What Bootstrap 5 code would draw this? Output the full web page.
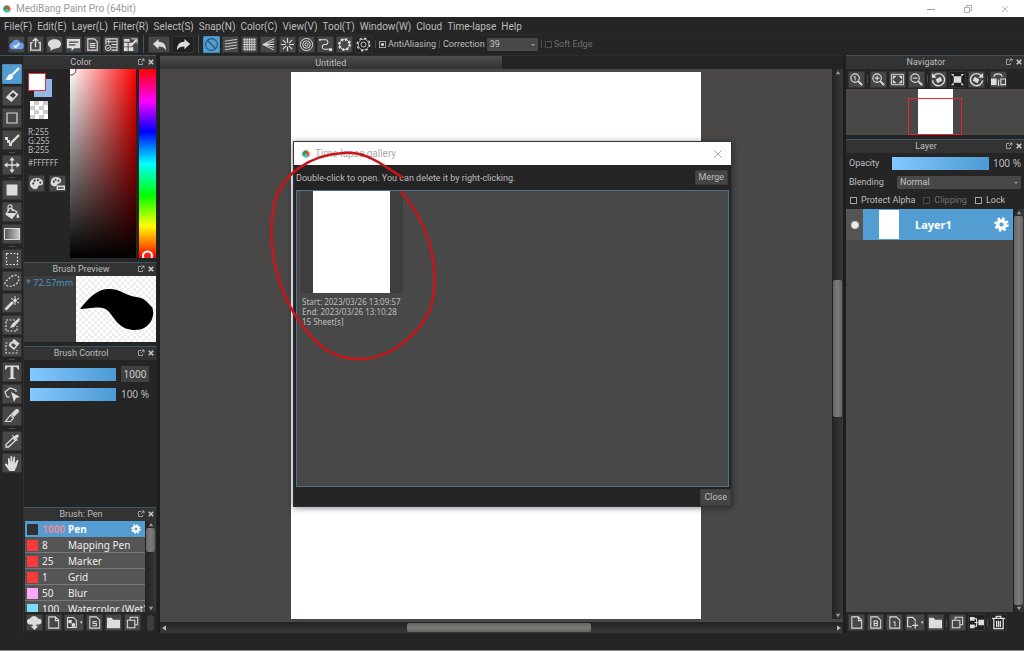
<!DOCTYPE html>
<html lang="en">
<head>
<meta charset="utf-8">
<meta name="viewport" content="width=device-width, initial-scale=1">
<title>MediBang Paint Pro (64bit)</title>
<link rel="stylesheet" href="https://cdn.jsdelivr.net/npm/bootstrap@5.3.0/dist/css/bootstrap.min.css">
<style>
:root{--ink:#252525;--panel:#494846;--line:#3d5663;--hot:#539dd3;--txt:#bdbdbd}
body{font-family:Roboto,"Noto Sans",sans-serif;font-size:9px;line-height:12px;color:var(--txt);background:var(--ink)}
button,input,select{font-family:inherit}
svg{display:block}
.app{height:100vh;min-height:600px;border-bottom:1px solid #8b8785}
.titlebar{height:17px;background:#fff;color:#999;font-size:10px;padding:0 14px 0 2px}
.titlebar button,.gallery-title button{border:0;background:none;padding:0;color:#999}
.winbtns{gap:27px}
.menubar{height:18px;font-size:10px;gap:5px;padding:2px 4px 0;border-bottom:1px solid #2b2b2b}
.menubar a{color:#bdbdbd;text-decoration:none;white-space:nowrap}
.toolbar{height:20px;padding:0 4px 2px;gap:2px}
.ib{width:17px;height:17px;padding:0;border:1px solid #343434;border-radius:1px;background:#474747;color:#dcdcdc;display:flex;align-items:center;justify-content:center;flex:none}
.ib svg{width:15px;height:15px}
.ib.wide{width:22px}
.ib.dark{background:#202020}
.ib.on{background:var(--hot);border-color:#4a8cbb;color:#26587a}
.vsep{width:1px;height:8px;background:#4b4b4b;margin:0 1px;flex:none}
.vline{width:1px;height:18px;background:#36586d;margin:0 2px;flex:none}
.tick{appearance:none;width:7px;height:7px;margin:0;border:1px solid #a6a6a6;background:#222;flex:none}
.tick:checked{background:radial-gradient(#d5d5d5 0 30%,#222 55%)}
.tick:disabled{border-color:#4c4c4c}
.off{color:#6f6f6f}
.pick{appearance:none;height:13px;border:0;border-radius:1px;padding:0 3px;font-size:9px;line-height:12px;color:#c4c4c4;background:#484848}
.pickbox{position:relative}
.pickbox::after{content:"";position:absolute;right:3px;top:6px;border:2px solid transparent;border-top-color:#999;pointer-events:none}
.strip{width:24px;padding:8px 2px 0;gap:2px;border-top:1px solid var(--line);border-right:1px solid #303030}
.strip .ib{width:20px;height:20px}
.strip .ib svg{width:16px;height:16px}
.strip .ib.on{color:#fff}
.strip i{height:1px;width:6px;background:#4b4b4b;align-self:center}
.dock-l{width:133px;padding-right:1px}
.dock-r{width:178px}
.dhead{height:14px;border-top:1px solid var(--line);background:#333;text-align:center;position:relative;flex:none;padding-right:18px}
.dhead span{position:absolute;right:1px;top:2px;display:flex;gap:2px;color:#c8c8c8}
.dhead svg{width:8px;height:8px}
.colorbody{height:193px;padding:0 0 4px 4px}
.rgb{width:42px;font-family:"Noto Sans",sans-serif;line-height:9px;font-size:8px}
.swatches{height:32px;position:relative}
.fg,.bgc{position:absolute;width:18px;height:18px}
.fg{left:0;top:4px;background:#fff;border:1px solid #e0303a}
.bgc{left:6px;top:10px;background:#92b8e6}
.clear{width:18px;height:18px;margin-left:2px;background:repeating-conic-gradient(#ccc 0 25%,#fff 0 50%) 0 0/9px 9px}
.sv{width:66px;background:linear-gradient(transparent,#000),linear-gradient(90deg,#fff,#f00)}
.hue{width:17px;background:linear-gradient(#f00,#f0f 17%,#00f 33%,#0ff 50%,#0f0 67%,#ff0 83%,#f00);overflow:hidden}
.hue svg{margin-top:auto}
.preview{height:66px;background:#3d3d3d}
.preview .size{color:#4f93c2;padding:1px 2px;font-family:"Noto Sans",sans-serif}
.preview .ink{width:80px;background:repeating-conic-gradient(#eee 0 25%,#fff 0 50%) 0 0/6px 6px}
.gapline{height:4px;flex:none}
.bar{appearance:none;height:13px;margin:0;background:linear-gradient(90deg,#84c8ff,#4c9ad4);min-width:0}
.bar::-webkit-slider-thumb{appearance:none;width:1px;height:1px;opacity:0}
.ctl{height:20px;padding:0 7px 0 6px;gap:5px}
.num{width:28px;height:16px;border:0;background:#414141;color:#ccc;text-align:center;font:10px "Noto Sans",sans-serif;padding:0}
.pct{font:10px "Noto Sans",sans-serif;white-space:nowrap}
.brushes{height:91px;background:#2a2a2a;overflow:hidden;padding-left:1px}
.brow{height:16px;border-bottom:1px solid #777;background:#555;font:10px/16px "Noto Sans",sans-serif;color:#eee;flex:none;padding-left:2px}
.brow .chip{width:11px;height:11px;flex:none;margin-top:3px}
.brow .val{width:30px;padding-left:4px;white-space:nowrap;flex:none}
.brow.sel{background:var(--hot);border-color:var(--hot);font-weight:700;color:#fff}
.brow.sel .val{color:#e68a9a}
.sb{width:11px;background:linear-gradient(90deg,#222,#383838);flex:none;padding:0 1px}
.sb svg{width:8px;height:7px;color:#999;flex:none;align-self:center}
.thumb{background:linear-gradient(90deg,#666,#7b7b78,#666);border-radius:2px}
.btnrow{height:21px;gap:2px;padding:0 2px;flex:none}
.btnrow .vsep{margin:0}
.btnrow .wide{width:20px}
.status{height:17px;flex:none}
.mid{min-width:0;border:solid #1e1e1e;border-width:0 3px}
.tabs{height:14px;background:#232323;border-top:1px solid #2c2c2c}
.tabs .tab{width:50%;background:linear-gradient(#4d4d4d,#303030);text-align:center;line-height:14px}
.stage{background:var(--panel);min-width:0;padding-top:3px}
.paper{width:410px;margin-left:131px;background:#fff}
.hsb{height:11px;background:linear-gradient(#222,#3a3a3a);padding:1px 0}
.hsb .thumb{background:linear-gradient(#666763,#7a7a76,#666763)}
.hsb svg{width:8px;height:8px;color:#bbb}
.navbtns{height:20px}
.navview{height:46px;background:var(--panel)}
.navpaper{width:35px;background:#fff}
.navframe{position:absolute;left:62px;top:9px;width:54px;height:37px;border:1px solid #e3262f}
.field{padding:0 3px;height:18px}
.field.tall{height:20px}
.field label.name{width:44px}
.field #op{width:97px}
.layers{background:var(--panel)}
.layer{height:31px;background:var(--hot);color:#fff;font:700 11px "Noto Sans",sans-serif}
.eye{width:17px;background:#555}
.eye b{width:8px;height:8px;border-radius:50%;background:radial-gradient(#eee 40%,#999)}
.gallery{position:absolute;left:133px;top:86px;width:439px;height:366px;background:#242424;border:1px solid #2a3740;box-shadow:0 1px 6px #0007}
.gallery-title{height:23px;background:#fff;color:#aaa;font-size:10px;padding:1px 7px 0}
.gallery-top{height:25px;padding:0 3px 0 2px}
.gbtn{border:1px solid #3c3c3c;border-radius:1px;background:#454545;color:#bbb;padding:0 3px;font-size:9px;line-height:13px}
.gclose{line-height:15px;margin-top:2px}
.glist{border:1px solid #50728a;background:#484848;margin:0 2px;padding:0 4px}
.shot{width:102px;height:102px;background:#3e3e3e}
.shot div{width:77px;background:#fff;margin-right:2px}
.shottext{font:8px/10px "Noto Sans",sans-serif;padding:4px 0 0 1px;white-space:nowrap}
.ring{position:absolute;left:106px;top:92px;width:174px;height:216px;pointer-events:none}
</style>
</head>
<body>
<svg width="0" height="0" class="position-absolute" aria-hidden="true">
<defs>
<g id="logo"><circle cx="8" cy="8" r="7.500" fill="#eee"/><path d="M8 8V2A6 6 0 0 0 3 11z" fill="#18a05c"/><path d="M8 8L3 11A6 6 0 0 0 12 12z" fill="#2dc3c8"/><path d="M8 8V2A6 6 0 0 1 12 12z" fill="#e8502c"/></g>
</defs>
<symbol id="cloud" viewBox="0 0 16 16"><path d="M4 13a3.500 3.500 0 0 1-.5-6.900A4.500 4.500 0 0 1 12 6a3.500 3.500 0 0 1 .5 7z" fill="#6ea0e8"/><path d="M5 9l2.200 2L11 7" fill="none" stroke="#fff" stroke-width="1.600"/></symbol>
<symbol id="share" viewBox="0 0 16 16"><path d="M5 6H3v8h10V6h-2M8 11V2M5 4.500L8 1.500l3 3" fill="none" stroke="currentColor" stroke-width="1.500"/></symbol>
<symbol id="talk" viewBox="0 0 16 16"><path d="M8 2.500c4 0 7 2 7 5s-3 5-7 5l-4.500 2 .5-3C2 10.500 1 9 1 7.500c0-3 3-5 7-5z" fill="currentColor"/></symbol>
<symbol id="msg" viewBox="0 0 16 16"><path d="M1 2h14v10H9l-3 3v-3H1z" fill="currentColor"/><path d="M3 5.500h10M3 8.500h7" stroke="#444" stroke-width="1.300"/></symbol>
<symbol id="doc" viewBox="0 0 16 16"><path d="M3 2h7l3 3v9H3zM5 7h6M5 9h6M5 11h6" fill="none" stroke="currentColor" stroke-width="1.200"/></symbol>
<symbol id="sheet" viewBox="0 0 16 16"><path d="M2 2h12v12H8M2 2v6M2 5h12M5 2v5M8 8h6M8 11h6" fill="none" stroke="currentColor" stroke-width="1.100"/><circle cx="4.500" cy="11.500" r="3" fill="none" stroke="currentColor"/><path d="M3 11.500l1.300 1L6 10.500" fill="none" stroke="currentColor"/></symbol>
<symbol id="gridpen" viewBox="0 0 16 16"><path d="M1 2h6v3H1zM1 6h4v4H1zM6 6h4v4H6zM1 11h4v4H1zM6 11h5v4H6zM9 7l5-5 1 2-5 5z" fill="currentColor"/><path d="M9 2h6v5" stroke="currentColor" fill="none"/></symbol>
<symbol id="undo" viewBox="0 0 16 16"><path d="M7 2v3c5 0 8 3 8 9-2-3-4-4-8-4v3L1 7.500z" fill="currentColor"/></symbol>
<symbol id="redo" viewBox="0 0 16 16"><path d="M9 2v3c-5 0-8 3-8 9 2-3 4-4 8-4v3l6-5.500z" fill="currentColor"/></symbol>
<symbol id="ban" viewBox="0 0 16 16"><circle cx="8" cy="8" r="6.300" fill="none" stroke="currentColor" stroke-width="1.300"/><path d="M3.500 3.500l9 9" stroke="currentColor" stroke-width="1.300"/></symbol>
<symbol id="par" viewBox="0 0 16 16"><path d="M2 4.500l13-2M2 7.500l13-2M2 10.500l13-2M2 13.500l13-2" stroke="currentColor" stroke-width=".9"/></symbol>
<symbol id="grid" viewBox="0 0 16 16"><path d="M1 3h14M1 5.500h14M1 8h14M1 10.500h14M1 13h14M3 1v14M5.500 1v14M8 1v14M10.500 1v14M13 1v14" stroke="currentColor" stroke-width=".9"/></symbol>
<symbol id="vanish" viewBox="0 0 16 16"><path d="M14 2L2 8l12 6M14 5L2 8l12 3M2 8h12" fill="none" stroke="currentColor"/></symbol>
<symbol id="radial" viewBox="0 0 16 16"><path d="M8 1v5M8 10v5M1 8h5M10 8h5M3 3l3.500 3.500M9.500 9.500L13 13M13 3L9.500 6.500M6.500 9.500L3 13" stroke="currentColor" stroke-width="1.200"/></symbol>
<symbol id="rings" viewBox="0 0 16 16"><g fill="none" stroke="currentColor"><circle cx="8" cy="8" r="6.500"/><circle cx="8" cy="8" r="4"/><circle cx="8" cy="8" r="1.700"/></g></symbol>
<symbol id="curve" viewBox="0 0 16 16"><path d="M2 3h7a2.800 2.800 0 0 1 0 5H7a2.500 2.500 0 0 0 0 5h6" fill="none" stroke="currentColor" stroke-width="1.100"/><path d="M1 2h2v2H1zM12 12h3v3h-3z" fill="currentColor"/></symbol>
<symbol id="dots" viewBox="0 0 16 16"><circle cx="8" cy="8" r="5.500" fill="none" stroke="currentColor"/><circle cx="8" cy="8" r="5.500" fill="none" stroke="currentColor" stroke-width="3" stroke-dasharray="2 2.320"/></symbol>
<symbol id="gearo" viewBox="0 0 16 16"><g fill="none" stroke="currentColor"><circle cx="8" cy="8" r="5.700" stroke-width=".9"/><circle cx="8" cy="8" r="2.700"/><circle cx="8" cy="8" r="6.800" stroke-width="1.300" stroke-dasharray="2.600 2.740"/></g></symbol>
<symbol id="gear" viewBox="0 0 16 16"><circle cx="8" cy="8" r="4" fill="none" stroke="currentColor" stroke-width="3.500"/><circle cx="8" cy="8" r="6.300" fill="none" stroke="currentColor" stroke-width="2.800" stroke-dasharray="2.600 2.348"/></symbol>
<symbol id="brush" viewBox="0 0 16 16"><path d="M15 2L8 9" stroke="currentColor" stroke-width="2.200"/><path d="M7 8l2 2c0 4-4 5-8 3 3 0 2-5 6-5z" fill="currentColor"/></symbol>
<symbol id="eraser" viewBox="0 0 16 16"><path d="M9 2l5.500 4.500L7.500 14 1.500 9.500z" fill="currentColor"/><path d="M9 4.500l3 2.500-3 3-3.300-2.500z" fill="#3d3d3d"/></symbol>
<symbol id="sq" viewBox="0 0 16 16"><path d="M3 3h10v10H3z" fill="none" stroke="currentColor" stroke-width="1.200"/></symbol>
<symbol id="polyline" viewBox="0 0 16 16"><path d="M7 11l8-8" stroke="currentColor" stroke-width="2.400"/><path d="M1 5h3v3H1zM3 8h3v3H3zM5 11h3v3H5z" fill="currentColor"/></symbol>
<symbol id="move" viewBox="0 0 16 16"><path d="M8 2v12M2 8h12" stroke="currentColor" stroke-width="1.300"/><path d="M8 0l2.700 3.500H5.300zM8 16l2.700-3.500H5.300zM0 8l3.500-2.700v5.400zM16 8l-3.500-2.700v5.400z" fill="currentColor"/></symbol>
<symbol id="fillsq" viewBox="0 0 16 16"><path d="M2.500 2.500h11v11h-11z" fill="currentColor"/></symbol>
<symbol id="bucket" viewBox="0 0 16 16"><path d="M2 9h10l-4 6-6-4z" fill="currentColor"/><path d="M4 8V3c0-3 4-3 4 0v4M6 4l7 4-5 6-6-4z" fill="none" stroke="currentColor" stroke-width="1.200"/><path d="M14 9c1 3 2 5 0 5s-2-2 0-5z" fill="currentColor"/></symbol>
<linearGradient id="gr"><stop stop-color="#555"/><stop offset="1" stop-color="#ccc"/></linearGradient>
<symbol id="grad" viewBox="0 0 16 16"><path d="M.5 2.500h15v11H.5z" fill="url(#gr)" stroke="currentColor"/></symbol>
<symbol id="sel" viewBox="0 0 16 16"><path d="M2.500 2.500h11v11h-11z" fill="none" stroke="currentColor" stroke-width="1.200" stroke-dasharray="2 1.500"/></symbol>
<symbol id="lasso" viewBox="0 0 16 16"><path d="M2 8C5 6 7 3 11 2c4 0 5 4 3 7s-7 5-10 4-4-3-2-5z" fill="none" stroke="currentColor" stroke-width="1.200" stroke-dasharray="2 1.500"/></symbol>
<symbol id="wand" viewBox="0 0 16 16"><path d="M1.500 14.500L9 7" stroke="currentColor" stroke-width="2.600"/><path d="M11 1v3M11 7v3M7 3l2 1.500M15 3l-2 1.500M15 8l-2-1" stroke="currentColor"/><circle cx="11" cy="5.500" r="1.800" fill="currentColor"/></symbol>
<symbol id="selpen" viewBox="0 0 16 16"><path d="M11 3H2v11h11V9" fill="none" stroke="currentColor" stroke-width="1.200" stroke-dasharray="2 1.500"/><path d="M15 1l1 2-6 7-4 1 2-4z" fill="currentColor"/></symbol>
<symbol id="selera" viewBox="0 0 16 16"><path d="M7 4H2v10h11v-3" fill="none" stroke="currentColor" stroke-width="1.200" stroke-dasharray="2 1.500"/><path d="M10 0l5.500 4.500L10 11 4.500 6.500z" fill="currentColor"/><path d="M9 4l3 2.500-2 2.300-3-2.500z" fill="#444"/></symbol>
<symbol id="type" viewBox="0 0 16 16"><path d="M1 1.500h14v4h-1.200c-.3-1.700-1-2.500-2.800-2.500H9.500v10c0 .9.500 1.200 2 1.200v.8h-7v-.8c1.500 0 2-.3 2-1.200V3H5c-1.800 0-2.500.8-2.800 2.500H1z" fill="currentColor"/></symbol>
<symbol id="selarrow" viewBox="0 0 16 16"><path d="M6 11H3L1 6l5-4 6 2v2" fill="none" stroke="currentColor" stroke-width="1.200"/><path d="M7 6l9 5-4 1-2 4z" fill="currentColor"/></symbol>
<symbol id="knife" viewBox="0 0 16 16"><path d="M12 1c3 0 4 2 2 4l-4 4-3-3z" fill="currentColor"/><path d="M6.500 7l3 3-3 3.500H1.500z" fill="none" stroke="currentColor" stroke-width="1.200"/></symbol>
<symbol id="dropper" viewBox="0 0 16 16"><path d="M9 5l2.500 2.500-7 6.500H2v-2.500z" fill="none" stroke="currentColor" stroke-width="1.300"/><path d="M8 3l5 5 1-1-1.500-1.500C17 3 14-1 10.500 3.500L9 2z" fill="currentColor"/></symbol>
<symbol id="hand" viewBox="0 0 16 16"><path d="M4 9V3.500a1 1 0 0 1 1.600 0L6.500 8V1.500a1 1 0 0 1 1.700 0V8L9.500 2a1 1 0 0 1 1.600.3L10.800 8.500 13 5a1 1 0 0 1 1.500.6L12.500 12l-2 4h-5L1 10a1 1 0 0 1 1.500-1.200L4 10z" fill="currentColor"/></symbol>
<symbol id="palette" viewBox="0 0 16 16"><path d="M8 2c4 0 7 2 7 5s-2 3-4 3-1 4-4 4c-4 0-6-3-6-6s3-6 7-6z" fill="currentColor"/><g fill="#3a3a3a"><circle cx="4.500" cy="8" r="1.200"/><circle cx="6" cy="5" r="1.200"/><circle cx="9.500" cy="4.500" r="1.200"/><circle cx="12" cy="7" r="1.200"/></g></symbol>
<symbol id="palette2" viewBox="0 0 16 16"><path d="M6 1c4 0 6 2 6 4S10 8 9 8s-2 4-5 3-4-3-3-6 3-4 5-4zM7 10h9v5H7z" fill="currentColor"/><g fill="#3a3a3a"><circle cx="4" cy="6" r="1.100"/><circle cx="6" cy="4" r="1.100"/><circle cx="9" cy="5" r="1.100"/><path d="M8.500 12h6v1.500h-6z"/></g></symbol>
<symbol id="pop" viewBox="0 0 8 8"><path d="M4 1.500H1.500v5h4V5M4.500 1h2.500v2.500M7 1L4 4" fill="none" stroke="currentColor" stroke-width=".7"/></symbol>
<symbol id="xx" viewBox="0 0 8 8"><path d="M1.800 1.800l4.400 4.400M6.200 1.800l-4.400 4.400" stroke="currentColor" stroke-width="1.600"/></symbol>
<symbol id="thinx" viewBox="0 0 16 16"><path d="M3 3l10 10M13 3L3 13" stroke="currentColor" stroke-width="1.100"/></symbol>
<symbol id="up" viewBox="0 0 8 8"><path d="M4 2l2.500 4h-5z" fill="currentColor"/></symbol>
<symbol id="down" viewBox="0 0 8 8"><path d="M4 6l2.500-4h-5z" fill="currentColor"/></symbol>
<symbol id="left" viewBox="0 0 8 8"><path d="M2 4l4-2.500v5z" fill="currentColor"/></symbol>
<symbol id="right" viewBox="0 0 8 8"><path d="M6 4L2 1.500v5z" fill="currentColor"/></symbol>
<symbol id="clouddl" viewBox="0 0 16 16"><path d="M3 10a3 3 0 0 1 0-6 5 5 0 0 1 9 0 3 3 0 0 1 1 6h-3v2h2l-4 4-4-4h2v-2z" fill="currentColor"/></symbol>
<symbol id="page" viewBox="0 0 16 16"><path d="M3 2h7l3.500 3.500V14H3zM10 2v4h3.500" fill="none" stroke="currentColor" stroke-width="1.100"/></symbol>
<symbol id="pagepat" viewBox="0 0 16 16"><path d="M3 2h7l3.500 3.500V14H3z" fill="none" stroke="currentColor" stroke-width="1.200"/><path d="M4 5h4v4H4zM8 9h4v4H8z" fill="currentColor"/></symbol>
<symbol id="pages" viewBox="0 0 16 16"><path d="M3 2h7l3.500 3.500V14H3zM10.500 7H6.500v2h3.500v2.500H6" fill="none" stroke="currentColor" stroke-width="1.100"/></symbol>
<symbol id="page8" viewBox="0 0 16 16"><path d="M3 2h7l3.500 3.500V14H3zM6.500 6.500h3.500v5H6.500zM6.500 9H10" fill="none" stroke="currentColor" stroke-width="1.100"/></symbol>
<symbol id="page1" viewBox="0 0 16 16"><path d="M3 2h7l3.500 3.500V14H3zM6.500 7.500h2V12" fill="none" stroke="currentColor" stroke-width="1.100"/></symbol>
<symbol id="pageplus" viewBox="0 0 16 16"><path d="M7 13H2V2h6l3 3v2M11 8v7M7.500 11.500h7" fill="none" stroke="currentColor" stroke-width="1.400"/></symbol>
<symbol id="folder" viewBox="0 0 16 16"><path d="M1 3h5l1.500 2H15v9H1z" fill="currentColor"/></symbol>
<symbol id="copy" viewBox="0 0 16 16"><path d="M2.500 5.500h8v8h-8zM5.500 5V2.500h8v8H11" fill="none" stroke="currentColor" stroke-width="1.100"/></symbol>
<symbol id="mergei" viewBox="0 0 16 16"><path d="M1 2h5v4H1zM1 10h5v4H1zM10 5h6v6h-6z" fill="currentColor"/><path d="M5 4h3v8H5M6 8h4" fill="none" stroke="currentColor" stroke-width="1.200"/></symbol>
<symbol id="trash" viewBox="0 0 16 16"><path d="M1 3.500h14M5.500 3V1.500h5V3M3 4v10.500h10V4M6 6v7M8 6v7M10 6v7" fill="none" stroke="currentColor" stroke-width="1.400"/></symbol>
<symbol id="zoom1" viewBox="0 0 16 16"><circle cx="6.500" cy="6.500" r="4.500" fill="none" stroke="currentColor" stroke-width="1.200"/><path d="M10 10l4 4" stroke="currentColor" stroke-width="2.200"/><path d="M5 5.500L6.500 4.500V9" fill="none" stroke="currentColor"/></symbol>
<symbol id="zoomin" viewBox="0 0 16 16"><circle cx="6.500" cy="6.500" r="4.500" fill="none" stroke="currentColor" stroke-width="1.200"/><path d="M10 10l4 4" stroke="currentColor" stroke-width="2.200"/><path d="M4 6.500h5M6.500 4v5" stroke="currentColor" stroke-width="1.200"/></symbol>
<symbol id="zoomout" viewBox="0 0 16 16"><circle cx="6.500" cy="6.500" r="4.500" fill="none" stroke="currentColor" stroke-width="1.200"/><path d="M10 10l4 4" stroke="currentColor" stroke-width="2.200"/><path d="M4 6.500h5" stroke="currentColor" stroke-width="1.200"/></symbol>
<symbol id="fit" viewBox="0 0 16 16"><path d="M1.500 2.500h13v11h-13z" fill="none" stroke="currentColor"/><path d="M3 4h4L3 8zM13 4H9l4 4zM3 12h4L3 8zM13 12H9l4-4z" fill="currentColor"/></symbol>
<symbol id="rotl" viewBox="0 0 16 16"><path d="M3 4a6.500 6.500 0 1 1-1.500 5" fill="none" stroke="currentColor" stroke-width="1.500"/><path d="M1 1v5h5zM5 8l5-3 2 4-5 3z" fill="currentColor"/></symbol>
<symbol id="rotr" viewBox="0 0 16 16"><path d="M13 4a6.500 6.500 0 1 0 1.500 5" fill="none" stroke="currentColor" stroke-width="1.500"/><path d="M15 1v5h-5zM11 8L6 5 4 9l5 3z" fill="currentColor"/></symbol>
<symbol id="norot" viewBox="0 0 16 16"><path d="M4 4.500h8v7H4zM1 2h3v3zM15 2h-3v3zM1 14h3v-3zM15 14h-3v-3z" fill="currentColor"/></symbol>
<symbol id="flip" viewBox="0 0 16 16"><path d="M0 7h6v7H0z" fill="currentColor"/><path d="M10.500 7.500h5v6h-5zM3 5c1-4 8-4 9 0M8 8v7" fill="none" stroke="currentColor" stroke-width="1.200"/></symbol>
</svg>

<div class="app d-flex flex-column overflow-hidden">
<header>
  <div class="titlebar d-flex align-items-center justify-content-between">
    <div class="d-flex align-items-center gap-1"><svg width="10" height="10" viewBox="0 0 16 16"><use href="#logo"/></svg>MediBang Paint Pro (64bit)</div>
    <div class="winbtns d-flex">
      <button aria-label="Minimize"><svg width="10" height="10" viewBox="0 0 10 10"><path d="M1 5.500h8" stroke="currentColor"/></svg></button>
      <button aria-label="Restore"><svg width="10" height="10" viewBox="0 0 10 10"><path d="M1.500 3.500h5v5h-5zM3.500 3V1.500h5v5H7" fill="none" stroke="currentColor" stroke-width=".8"/></svg></button>
      <button aria-label="Close window"><svg width="10" height="10"><use href="#thinx"/></svg></button>
    </div>
  </div>
  <nav class="menubar d-flex align-items-center">
    <a href="#">File(F)</a><a href="#">Edit(E)</a><a href="#">Layer(L)</a><a href="#">Filter(R)</a><a href="#">Select(S)</a><a href="#">Snap(N)</a><a href="#">Color(C)</a><a href="#">View(V)</a><a href="#">Tool(T)</a><a href="#">Window(W)</a><a href="#">Cloud</a><a href="#">Time-lapse</a><a href="#">Help</a>
  </nav>
  <div class="toolbar d-flex align-items-center">
    <button class="ib ms-1" aria-label="Cloud"><svg><use href="#cloud"/></svg></button>
    <button class="ib" aria-label="Share"><svg><use href="#share"/></svg></button>
    <button class="ib" aria-label="Talk"><svg><use href="#talk"/></svg></button>
    <button class="ib" aria-label="Message"><svg><use href="#msg"/></svg></button>
    <button class="ib" aria-label="Document"><svg><use href="#doc"/></svg></button>
    <button class="ib" aria-label="Sheet"><svg><use href="#sheet"/></svg></button>
    <button class="ib" aria-label="Edit grid"><svg><use href="#gridpen"/></svg></button>
    <span class="vline"></span>
    <button class="ib wide" aria-label="Undo"><svg><use href="#undo"/></svg></button>
    <button class="ib wide dark" aria-label="Redo"><svg><use href="#redo"/></svg></button>
    <span class="vline"></span>
    <button class="ib on" aria-label="Snap off"><svg><use href="#ban"/></svg></button>
    <button class="ib" aria-label="Parallel"><svg><use href="#par"/></svg></button>
    <button class="ib" aria-label="Grid"><svg><use href="#grid"/></svg></button>
    <button class="ib" aria-label="Vanishing point"><svg><use href="#vanish"/></svg></button>
    <button class="ib" aria-label="Radial"><svg><use href="#radial"/></svg></button>
    <button class="ib" aria-label="Circle"><svg><use href="#rings"/></svg></button>
    <button class="ib" aria-label="Curve"><svg><use href="#curve"/></svg></button>
    <button class="ib" aria-label="Ellipse"><svg><use href="#dots"/></svg></button>
    <button class="ib dark" aria-label="Snap settings"><svg><use href="#gearo"/></svg></button>
    <span class="vsep"></span>
    <input class="tick" type="checkbox" id="aa" checked><label for="aa">AntiAliasing</label>
    <span class="vsep"></span>
    <label for="corr">Correction</label>
    <span class="pickbox"><select class="pick d-block" id="corr" style="width:51px"><option>39</option></select></span>
    <span class="vsep"></span>
    <input class="tick" type="checkbox" id="soft" disabled><label for="soft" class="off">Soft Edge</label>
  </div>
</header>

<div class="d-flex flex-grow-1" style="min-height:0">
  <aside class="strip d-flex flex-column flex-shrink-0">
    <button class="ib on" aria-label="Brush"><svg><use href="#brush"/></svg></button>
    <button class="ib" aria-label="Eraser"><svg><use href="#eraser"/></svg></button>
    <button class="ib" aria-label="Shape"><svg><use href="#sq"/></svg></button>
    <button class="ib" aria-label="Dot"><svg><use href="#polyline"/></svg></button><i></i>
    <button class="ib" aria-label="Move"><svg><use href="#move"/></svg></button><i></i>
    <button class="ib" aria-label="Fill shape"><svg><use href="#fillsq"/></svg></button>
    <button class="ib" aria-label="Bucket"><svg><use href="#bucket"/></svg></button>
    <button class="ib" aria-label="Gradient"><svg><use href="#grad"/></svg></button><i></i>
    <button class="ib" aria-label="Select"><svg><use href="#sel"/></svg></button>
    <button class="ib" aria-label="Lasso"><svg><use href="#lasso"/></svg></button>
    <button class="ib" aria-label="Magic wand"><svg><use href="#wand"/></svg></button>
    <button class="ib" aria-label="Select pen"><svg><use href="#selpen"/></svg></button>
    <button class="ib" aria-label="Select eraser"><svg><use href="#selera"/></svg></button><i></i>
    <button class="ib" aria-label="Text"><svg><use href="#type"/></svg></button>
    <button class="ib" aria-label="Operation"><svg><use href="#selarrow"/></svg></button>
    <button class="ib" aria-label="Divide"><svg><use href="#knife"/></svg></button><i></i>
    <button class="ib" aria-label="Eyedropper"><svg><use href="#dropper"/></svg></button>
    <button class="ib" aria-label="Hand"><svg><use href="#hand"/></svg></button>
  </aside>

  <aside class="dock-l d-flex flex-column flex-shrink-0">
    <div class="dhead">Color<span><svg><use href="#pop"/></svg><svg><use href="#xx"/></svg></span></div>
    <div class="colorbody d-flex">
      <div class="rgb">
        <div class="swatches"><div class="bgc"></div><div class="fg"></div></div>
        <div class="clear mb-1"></div>
        <div class="pt-1">R:255<br>G:255<br>B:255</div>
        <div class="pt-1">#FFFFFF</div>
        <div class="d-flex gap-1 pt-2"><button class="ib" aria-label="Palette"><svg><use href="#palette"/></svg></button><button class="ib" aria-label="Palette settings"><svg><use href="#palette2"/></svg></button></div>
      </div>
      <div class="sv"><svg width="8" height="8" viewBox="0 0 8 8"><circle cx="1" cy="1" r="5" fill="none" stroke="#555"/></svg></div>
      <div class="hue ms-auto d-flex"><svg width="17" height="8" viewBox="0 0 17 8"><circle cx="8.500" cy="6" r="4.500" fill="#e22" stroke="#fff" stroke-width="2"/></svg></div>
    </div>
    <div class="dhead">Brush Preview<span><svg><use href="#pop"/></svg><svg><use href="#xx"/></svg></span></div>
    <div class="preview d-flex justify-content-between">
      <div class="size text-nowrap">* 72.57mm</div>
      <div class="ink"><svg width="80" height="66" viewBox="0 0 80 66"><path d="M4 33C14 20 22 13 33 13C45 13 50 20 60 21C70 22 72 28 76 31C80 40 74 54 59 54C45 54 40 45 34 37C27 28 15 33 4 33z"/></svg></div>
    </div>
    <div class="gapline"></div>
    <div class="dhead">Brush Control<span><svg><use href="#pop"/></svg><svg><use href="#xx"/></svg></span></div>
    <div class="flex-grow-1 pt-1">
      <div class="ctl d-flex align-items-center"><input class="bar flex-grow-1" type="range" aria-label="Brush size"><input class="num" value="1000" aria-label="Brush size value"></div>
      <div class="ctl d-flex align-items-center"><input class="bar flex-grow-1" type="range" aria-label="Brush opacity"><span class="pct">100 %</span></div>
    </div>
    <div class="dhead">Brush: Pen<span><svg><use href="#pop"/></svg><svg><use href="#xx"/></svg></span></div>
    <div class="brushes d-flex">
      <div class="flex-grow-1 d-flex flex-column overflow-hidden" style="min-width:0">
        <div class="brow sel d-flex"><div class="chip" style="background:#303030"></div><div class="val">1000</div>Pen<svg class="ms-auto me-1 align-self-center" width="10" height="10"><use href="#gear"/></svg></div>
        <div class="brow d-flex"><div class="chip" style="background:#f83a3a"></div><div class="val">8</div>Mapping Pen</div>
        <div class="brow d-flex"><div class="chip" style="background:#f83a3a"></div><div class="val">25</div>Marker</div>
        <div class="brow d-flex"><div class="chip" style="background:#f83a3a"></div><div class="val">1</div>Grid</div>
        <div class="brow d-flex"><div class="chip" style="background:#fca8fc"></div><div class="val">50</div>Blur</div>
        <div class="brow d-flex text-nowrap"><div class="chip" style="background:#79dcf8"></div><div class="val">100</div>Watercolor (Wet)</div>
      </div>
      <div class="sb d-flex flex-column justify-content-between"><svg><use href="#up"/></svg><div class="thumb mb-auto" style="height:26%"></div><svg><use href="#down"/></svg></div>
    </div>
    <div class="btnrow d-flex align-items-center">
      <button class="ib" aria-label="Download brush"><svg><use href="#clouddl"/></svg></button>
      <button class="ib" aria-label="New brush"><svg><use href="#page"/></svg></button>
      <button class="ib wide" aria-label="Bitmap brush"><svg><use href="#pagepat"/></svg><svg style="width:5px;height:5px"><use href="#down"/></svg></button>
      <button class="ib" aria-label="Script brush"><svg><use href="#pages"/></svg></button>
      <button class="ib" aria-label="Brush folder"><svg><use href="#folder"/></svg></button>
      <button class="ib" aria-label="Duplicate brush"><svg><use href="#copy"/></svg></button>
      <span class="ms-auto rounded-1" style="width:7px;height:16px;background:#3c3c3c"></span>
    </div>
  </aside>

  <main class="mid flex-grow-1 d-flex flex-column position-relative">
    <div class="tabs"><div class="tab">Untitled</div></div>
    <div class="d-flex flex-grow-1" style="min-height:0">
      <div class="stage flex-grow-1 d-flex"><div class="paper"></div></div>
      <div class="sb d-flex flex-column"><svg><use href="#up"/></svg><div style="height:37%"></div><div class="thumb" style="height:25%"></div><svg class="mt-auto"><use href="#down"/></svg></div>
    </div>
    <div style="height:3px;background:#494846"></div>
    <div class="hsb d-flex align-items-center mb-0"><svg><use href="#left"/></svg><div style="width:35%"></div><div class="thumb h-100" style="width:27%"></div><svg class="ms-auto"><use href="#right"/></svg></div>

    <section class="gallery d-flex flex-column" role="dialog" aria-label="Time-lapse gallery">
      <div class="gallery-title d-flex align-items-center"><svg width="10" height="10" viewBox="0 0 16 16"><use href="#logo"/></svg><span class="ms-1">Time-lapse gallery</span><button class="ms-auto" aria-label="Close gallery"><svg width="12" height="12"><use href="#thinx"/></svg></button></div>
      <div class="gallery-top d-flex align-items-center justify-content-between"><span>Double-click to open. You can delete it by right-clicking.</span><button class="gbtn">Merge</button></div>
      <div class="glist flex-grow-1">
        <div class="shot d-flex justify-content-center"><div></div></div>
        <div class="shottext">Start: 2023/03/26 13:09:57<br>End: 2023/03/26 13:10:28<br>15 Sheet[s]</div>
      </div>
      <div class="d-flex justify-content-end"><button class="gbtn gclose">Close</button></div>
    </section>
    <svg class="ring" viewBox="0 0 174 216"><path d="M136 30C117 19 102 4 77 6C44 8 15 27 8 58C-1 103 15 146 29 168C47 196 66 214 97 212C130 210 163 178 167 151C174 110 157 69 135 45" fill="none" stroke="#c91518" stroke-width="2.500" stroke-linecap="round"/></svg>
  </main>

  <aside class="dock-r d-flex flex-column flex-shrink-0">
    <div class="dhead">Navigator<span><svg><use href="#pop"/></svg><svg><use href="#xx"/></svg></span></div>
    <div class="btnrow navbtns d-flex align-items-center">
      <button class="ib" aria-label="Actual size"><svg><use href="#zoom1"/></svg></button><span class="vsep"></span>
      <button class="ib" aria-label="Zoom in"><svg><use href="#zoomin"/></svg></button>
      <button class="ib" aria-label="Fit"><svg><use href="#fit"/></svg></button>
      <button class="ib" aria-label="Zoom out"><svg><use href="#zoomout"/></svg></button><span class="vsep"></span>
      <button class="ib" aria-label="Rotate left"><svg><use href="#rotl"/></svg></button>
      <button class="ib dark" aria-label="Reset rotation"><svg><use href="#norot"/></svg></button>
      <button class="ib" aria-label="Rotate right"><svg><use href="#rotr"/></svg></button><span class="vsep"></span>
      <button class="ib" aria-label="Flip"><svg><use href="#flip"/></svg></button>
    </div>
    <div class="navview position-relative d-flex justify-content-center"><div class="navpaper"></div><div class="navframe"></div></div>
    <div class="gapline"></div>
    <div class="dhead">Layer<span><svg><use href="#pop"/></svg><svg><use href="#xx"/></svg></span></div>
    <div class="field tall d-flex align-items-center"><label for="op">Opacity</label><input class="bar ms-auto" type="range" id="op"><span class="ms-1 pct">100 %</span></div>
    <div class="field d-flex align-items-center"><label class="name" for="bl">Blending</label><span class="pickbox flex-grow-1 ms-1"><select class="pick d-block w-100" id="bl"><option>Normal</option></select></span></div>
    <div class="field d-flex align-items-center gap-1 ps-1">
      <input class="tick" type="checkbox" id="pa"><label for="pa">Protect Alpha</label>
      <input class="tick ms-1" type="checkbox" id="cl" disabled><label class="off" for="cl">Clipping</label>
      <input class="tick ms-1" type="checkbox" id="lk"><label for="lk">Lock</label>
    </div>
    <div class="d-flex flex-grow-1" style="min-height:0">
      <div class="layers flex-grow-1">
        <div class="layer d-flex align-items-center"><div class="eye h-100 d-flex align-items-center justify-content-center"><b></b></div><div class="bg-white ms-3" style="width:20px;height:29px"></div><span class="ms-3">Layer1</span><svg class="ms-auto me-1" width="15" height="15"><use href="#gear"/></svg></div>
      </div>
      <div class="sb d-flex flex-column"><svg><use href="#up"/></svg><div class="thumb flex-grow-1"></div><svg><use href="#down"/></svg></div>
    </div>
    <div class="btnrow d-flex align-items-center">
      <button class="ib" aria-label="New layer"><svg><use href="#page"/></svg></button>
      <button class="ib" aria-label="New 8bit layer"><svg><use href="#page8"/></svg></button>
      <button class="ib" aria-label="New 1bit layer"><svg><use href="#page1"/></svg></button>
      <button class="ib wide" aria-label="Add layer"><svg><use href="#pageplus"/></svg><svg style="width:5px;height:5px"><use href="#down"/></svg></button>
      <button class="ib" aria-label="Layer folder"><svg><use href="#folder"/></svg></button><span class="vsep"></span>
      <button class="ib" aria-label="Duplicate layer"><svg><use href="#copy"/></svg></button>
      <button class="ib dark" aria-label="Merge layer"><svg><use href="#mergei"/></svg></button><span class="vsep"></span>
      <button class="ib dark" aria-label="Delete layer"><svg><use href="#trash"/></svg></button>
    </div>
  </aside>
</div>
<footer class="status"></footer>
</div>
<script src="https://cdn.jsdelivr.net/npm/bootstrap@5.3.0/dist/js/bootstrap.bundle.min.js"></script>
</body>
</html>
